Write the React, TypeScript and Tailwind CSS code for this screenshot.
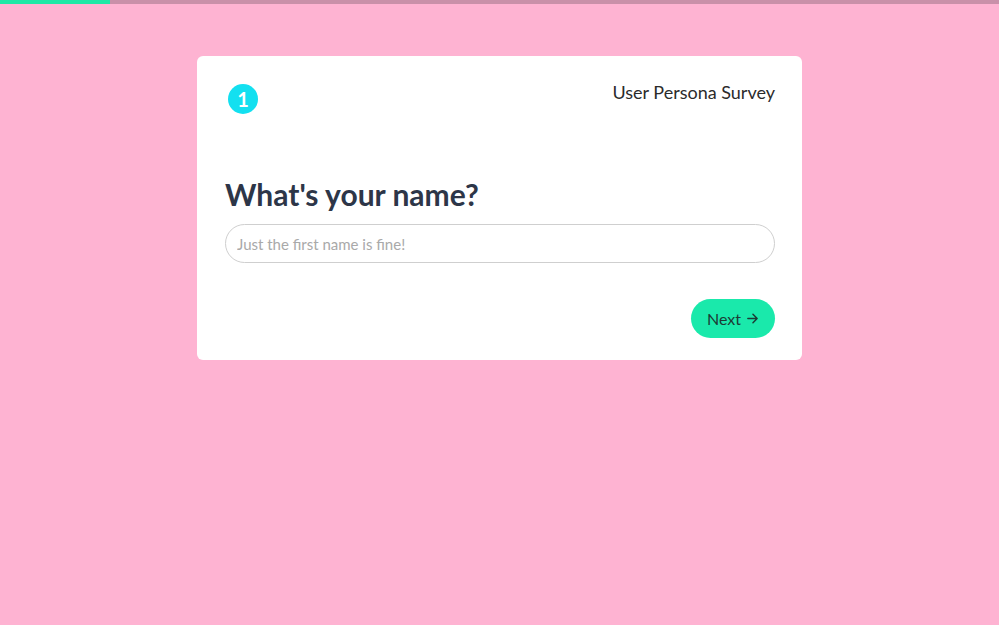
import React from "react";

export default function App() {
  return (
    <div
      className="min-h-screen w-full bg-[#feb3d2]"
      style={{ fontFamily: "Lato, 'Noto Sans', sans-serif" }}
    >
      {/* progress */}
      <div className="h-[4px] w-full bg-[#c990a9]">
        <div className="h-full w-[110px] bg-[#1ee8a6]" />
      </div>

      <div className="flex justify-center pt-[52px]">
        <div className="w-[605px] rounded-[6px] bg-white pl-[28px] pr-[27px] pt-[28px] pb-[22px]">
          <div className="flex items-start justify-between">
            <div className="ml-[3px] flex h-[30px] w-[30px] items-center justify-center rounded-full bg-[#13e0f0] text-[20px] font-bold leading-none text-white">
              1
            </div>
            <div className="text-[18px] leading-none text-[#2b2b2b] mt-[-1px]">
              User Persona Survey
            </div>
          </div>

          <h1 className="mt-[60px] text-[30px] font-bold leading-[40px] text-[#2d3648]">
            What's your name?
          </h1>

          <input
            type="text"
            placeholder="Just the first name is fine!"
            className="mt-[10px] block h-[39px] w-full rounded-full border border-[#cfcfcf] px-[11px] text-[15px] text-[#333] placeholder:text-[#a9a9a9] outline-none"
          />

          <div className="mt-[36px] flex justify-end">
            <button className="flex h-[39px] items-center gap-[5px] rounded-full bg-[#1ae9ab] px-[16px] text-[16px] text-[#1d3b35]">
              Next
              <svg width="13" height="13" viewBox="0 0 14 14" fill="none" stroke="currentColor" strokeWidth="1.6" strokeLinecap="round" strokeLinejoin="round">
                <path d="M2 7h10M7.5 2.5 12 7l-4.5 4.5" />
              </svg>
            </button>
          </div>
        </div>
      </div>
    </div>
  );
}
